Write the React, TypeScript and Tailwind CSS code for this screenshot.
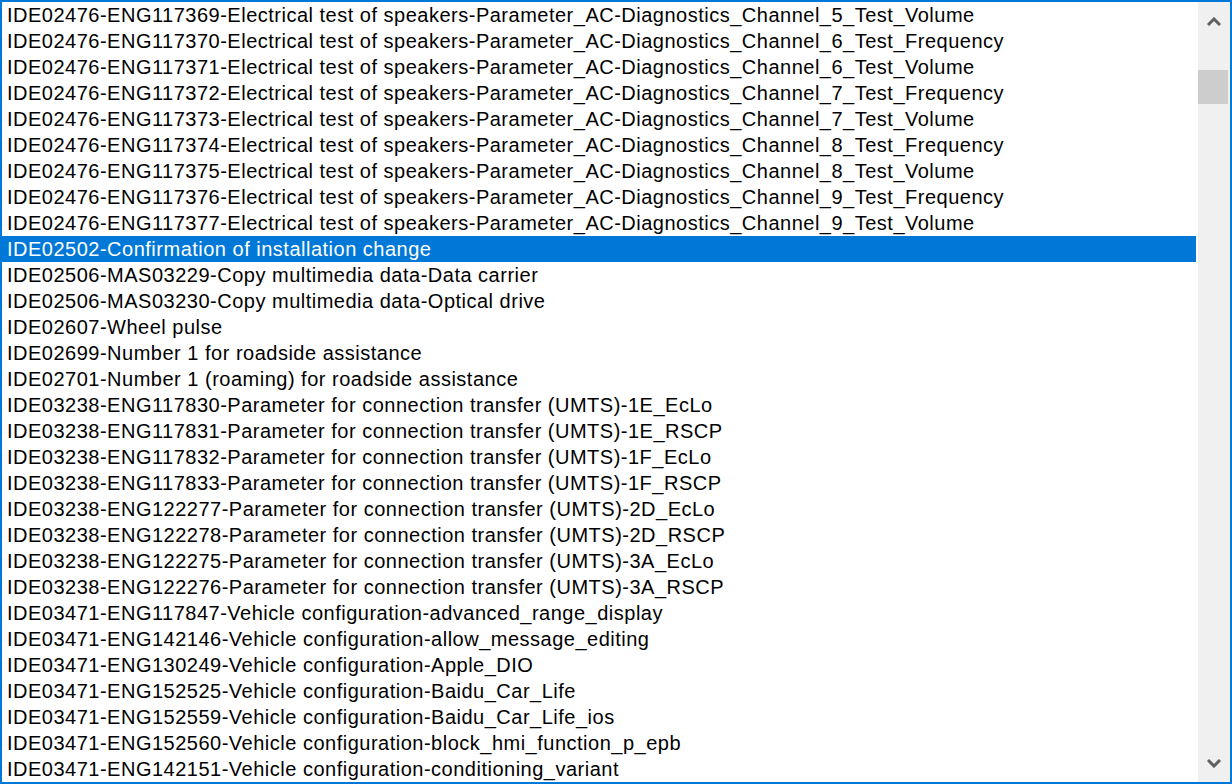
const items = [
  "IDE02476-ENG117369-Electrical test of speakers-Parameter_AC-Diagnostics_Channel_5_Test_Volume",
  "IDE02476-ENG117370-Electrical test of speakers-Parameter_AC-Diagnostics_Channel_6_Test_Frequency",
  "IDE02476-ENG117371-Electrical test of speakers-Parameter_AC-Diagnostics_Channel_6_Test_Volume",
  "IDE02476-ENG117372-Electrical test of speakers-Parameter_AC-Diagnostics_Channel_7_Test_Frequency",
  "IDE02476-ENG117373-Electrical test of speakers-Parameter_AC-Diagnostics_Channel_7_Test_Volume",
  "IDE02476-ENG117374-Electrical test of speakers-Parameter_AC-Diagnostics_Channel_8_Test_Frequency",
  "IDE02476-ENG117375-Electrical test of speakers-Parameter_AC-Diagnostics_Channel_8_Test_Volume",
  "IDE02476-ENG117376-Electrical test of speakers-Parameter_AC-Diagnostics_Channel_9_Test_Frequency",
  "IDE02476-ENG117377-Electrical test of speakers-Parameter_AC-Diagnostics_Channel_9_Test_Volume",
  "IDE02502-Confirmation of installation change",
  "IDE02506-MAS03229-Copy multimedia data-Data carrier",
  "IDE02506-MAS03230-Copy multimedia data-Optical drive",
  "IDE02607-Wheel pulse",
  "IDE02699-Number 1 for roadside assistance",
  "IDE02701-Number 1 (roaming) for roadside assistance",
  "IDE03238-ENG117830-Parameter for connection transfer (UMTS)-1E_EcLo",
  "IDE03238-ENG117831-Parameter for connection transfer (UMTS)-1E_RSCP",
  "IDE03238-ENG117832-Parameter for connection transfer (UMTS)-1F_EcLo",
  "IDE03238-ENG117833-Parameter for connection transfer (UMTS)-1F_RSCP",
  "IDE03238-ENG122277-Parameter for connection transfer (UMTS)-2D_EcLo",
  "IDE03238-ENG122278-Parameter for connection transfer (UMTS)-2D_RSCP",
  "IDE03238-ENG122275-Parameter for connection transfer (UMTS)-3A_EcLo",
  "IDE03238-ENG122276-Parameter for connection transfer (UMTS)-3A_RSCP",
  "IDE03471-ENG117847-Vehicle configuration-advanced_range_display",
  "IDE03471-ENG142146-Vehicle configuration-allow_message_editing",
  "IDE03471-ENG130249-Vehicle configuration-Apple_DIO",
  "IDE03471-ENG152525-Vehicle configuration-Baidu_Car_Life",
  "IDE03471-ENG152559-Vehicle configuration-Baidu_Car_Life_ios",
  "IDE03471-ENG152560-Vehicle configuration-block_hmi_function_p_epb",
  "IDE03471-ENG142151-Vehicle configuration-conditioning_variant",
];

const selectedIndex = 9;

function Chevron({ up }: { up?: boolean }) {
  return (
    <svg width="14" height="9" viewBox="0 0 14 9" className={up ? "" : "rotate-180"}>
      <path d="M1 8 L7 2 L13 8" fill="none" stroke="#606060" strokeWidth="3" />
    </svg>
  );
}

export default function App() {
  return (
    <div className="flex h-[784px] w-[1232px] overflow-hidden border-2 border-[#0078d7] bg-white">
      <div className="flex-1 overflow-hidden pr-[2px]">
        {items.map((item, i) => (
          <div
            key={i}
            className={
              i === selectedIndex
                ? "flex h-[26px] items-center whitespace-nowrap bg-[#0078d7] pl-[5px] text-white"
                : "flex h-[26px] items-center whitespace-nowrap pl-[5px] text-black"
            }
            style={{ fontFamily: '"Liberation Sans", Arial, sans-serif', fontSize: 20, letterSpacing: "0.5px" }}
          >
            {item}
          </div>
        ))}
      </div>
      <div className="flex w-[32px] flex-col bg-[#f0f0f0]">
        <div className="flex h-[38px] items-center justify-center">
          <Chevron up />
        </div>
        <div className="mt-[30px] h-[34px] w-[30px] bg-[#cdcdcd]" />
        <div className="flex-1" />
        <div className="flex h-[38px] items-center justify-center">
          <Chevron />
        </div>
      </div>
    </div>
  );
}
